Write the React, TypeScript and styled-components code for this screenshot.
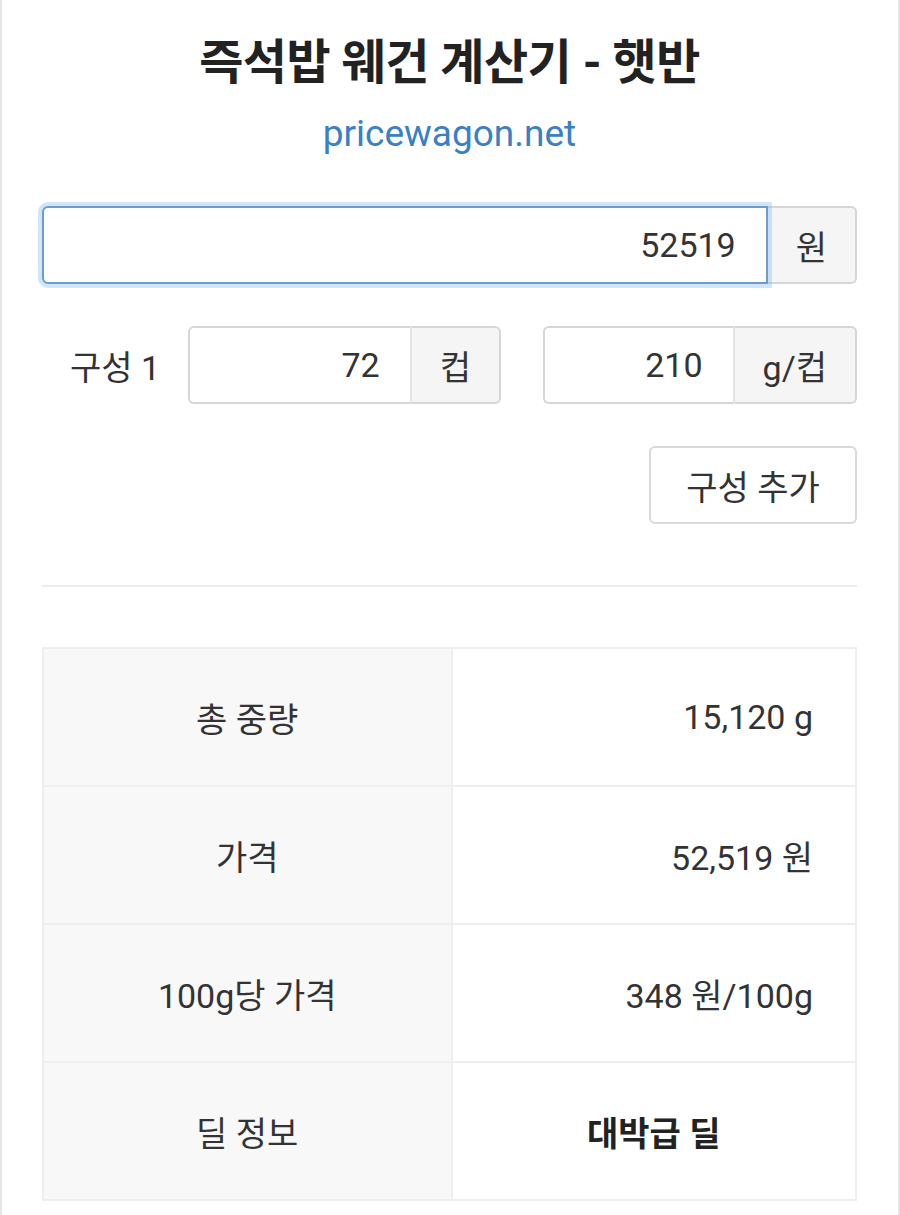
import { useState } from 'react';
import styled, { createGlobalStyle } from 'styled-components';

const GlobalStyle = createGlobalStyle`
    html, body {
        margin: 0;
        padding: 0;
        background: #fff;
    }
    body {
        font-family: Roboto, "Noto Sans CJK KR", sans-serif;
        color: #333;
    }
`;

const rows = [
    { label: '총 중량', value: '15,120 g' },
    { label: '가격', value: '52,519 원' },
    { label: '100g당 가격', value: '348 원/100g' },
    { label: '딜 정보', value: '대박급 딜', strong: true },
];

function App() {
    const [price, setPrice] = useState('52519');
    const [count, setCount] = useState('72');
    const [weight, setWeight] = useState('210');

    return (
        <>
            <GlobalStyle />
            <Page>
                <Title>즉석밥 웨건 계산기 - 햇반</Title>
                <SiteLink href="#">pricewagon.net</SiteLink>

                <PriceGroup>
                    <Field
                        $focused
                        autoFocus
                        value={price}
                        onChange={(e) => setPrice(e.target.value)}
                    />
                    <Addon>원</Addon>
                </PriceGroup>

                <ComboRow>
                    <ComboLabel>구성 1</ComboLabel>
                    <InputGroup $width="313px">
                        <Field value={count} onChange={(e) => setCount(e.target.value)} />
                        <Addon>컵</Addon>
                    </InputGroup>
                    <InputGroup $width="314px">
                        <Field value={weight} onChange={(e) => setWeight(e.target.value)} />
                        <Addon>g/컵</Addon>
                    </InputGroup>
                </ComboRow>

                <ButtonRow>
                    <AddButton type="button">구성 추가</AddButton>
                </ButtonRow>

                <Divider />

                <ResultTable>
                    <tbody>
                        {rows.map((row) => (
                            <tr key={row.label}>
                                <HeadCell>{row.label}</HeadCell>
                                <ValueCell $strong={row.strong}>{row.value}</ValueCell>
                            </tr>
                        ))}
                    </tbody>
                </ResultTable>
            </Page>
        </>
    );
}

const Page = styled.div`
    box-sizing: border-box;
    width: 900px;
    min-height: 1215px;
    padding: 38px 41px 0 40px;
    border-left: 2px solid #e6e6e6;
    border-right: 2px solid #e6e6e6;
    display: flex;
    flex-direction: column;
`;

const Title = styled.h1`
    margin: 0;
    font-size: 48px;
    line-height: 50px;
    font-weight: 700;
    text-align: center;
    color: #222;
    letter-spacing: -0.5px;
`;

const SiteLink = styled.a`
    margin-top: 24px;
    align-self: center;
    font-size: 37px;
    line-height: 44px;
    color: #3b7fc4;
    text-decoration: none;
`;

const InputGroup = styled.div<{ $width?: string }>`
    display: flex;
    height: 78px;
    width: ${(p) => p.$width ?? 'auto'};
    flex-shrink: 0;
`;

const PriceGroup = styled(InputGroup)`
    margin-top: 50px;
`;

const Field = styled.input<{ $focused?: boolean }>`
    flex: 1;
    min-width: 0;
    box-sizing: border-box;
    height: 100%;
    padding: 0 30px 0 12px;
    font-family: inherit;
    font-size: 34px;
    color: #333;
    text-align: right;
    background: #fff;
    border: 2px solid ${(p) => (p.$focused ? '#6d9bcb' : '#d6d6d6')};
    border-right: ${(p) => (p.$focused ? '2px solid #6d9bcb' : '2px solid #e3e3e3')};
    border-radius: 6px 0 0 6px;
    box-shadow: ${(p) => (p.$focused ? '0 0 0 4px rgba(140, 190, 240, 0.4)' : 'none')};
    outline: none;
    caret-color: #222;
    position: relative;
    z-index: ${(p) => (p.$focused ? 1 : 0)};
`;

const Addon = styled.span`
    box-sizing: border-box;
    display: flex;
    align-items: center;
    justify-content: center;
    padding: 0 28px;
    font-size: 34px;
    color: #333;
    background: #f5f5f5;
    border: 2px solid #d6d6d6;
    border-left: none;
    border-radius: 0 6px 6px 0;
    white-space: nowrap;
`;

const ComboRow = styled.div`
    display: flex;
    align-items: stretch;
    margin-top: 42px;

    ${InputGroup} + ${InputGroup} {
        margin-left: 42px;
    }
`;

const ComboLabel = styled.div`
    width: 146px;
    flex-shrink: 0;
    display: flex;
    align-items: center;
    justify-content: center;
    font-size: 34px;
    color: #333;
`;

const ButtonRow = styled.div`
    display: flex;
    justify-content: flex-end;
    margin-top: 42px;
`;

const AddButton = styled.button`
    box-sizing: border-box;
    width: 208px;
    height: 78px;
    font-family: inherit;
    font-size: 34px;
    color: #333;
    background: #fff;
    border: 2px solid #d9d9d9;
    border-radius: 6px;
    cursor: pointer;
`;

const Divider = styled.hr`
    width: 100%;
    margin: 61px 0 0;
    border: none;
    border-top: 2px solid #ececec;
`;

const ResultTable = styled.table`
    width: 100%;
    margin-top: 60px;
    border-collapse: collapse;
    table-layout: fixed;
    border: 2px solid #eee;
`;

const HeadCell = styled.td`
    width: 50%;
    height: 136px;
    padding: 0;
    text-align: center;
    font-size: 34px;
    color: #333;
    background: #f8f8f8;
    border: 2px solid #eee;
`;

const ValueCell = styled.td<{ $strong?: boolean }>`
    height: 136px;
    padding: 0 42px 0 0;
    text-align: ${(p) => (p.$strong ? 'center' : 'right')};
    font-size: 34px;
    font-weight: ${(p) => (p.$strong ? 700 : 400)};
    color: ${(p) => (p.$strong ? '#222' : '#333')};
    padding-left: ${(p) => (p.$strong ? '42px' : '0')};
    background: #fff;
    border: 2px solid #eee;
`;

export default App;
